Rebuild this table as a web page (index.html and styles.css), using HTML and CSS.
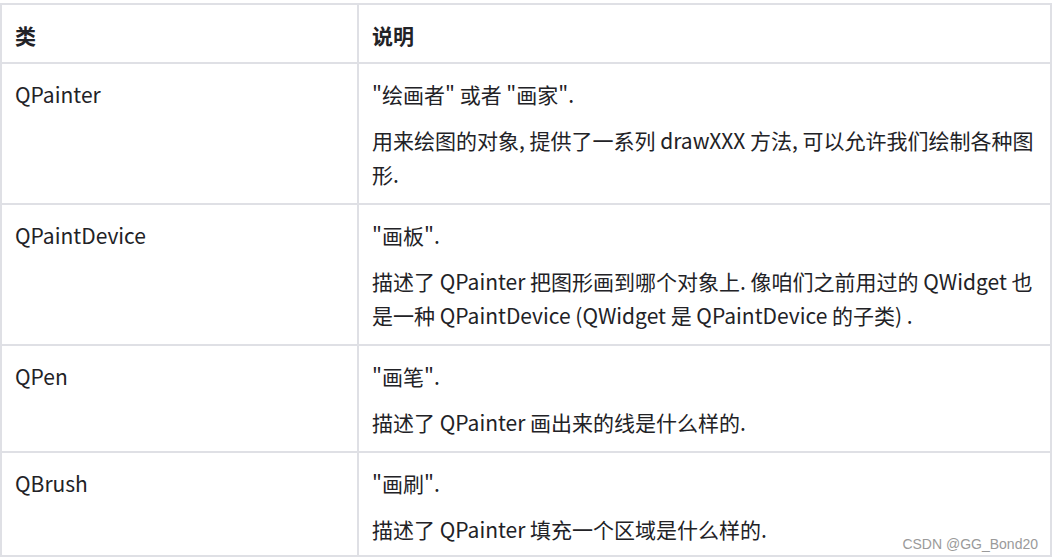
FILE: index.html
```html
<!DOCTYPE html>
<html lang="zh-CN">
<head>
<meta charset="utf-8">
<title>QPainter 类</title>
<link rel="stylesheet" href="styles.css">
</head>
<body>
<div class="page">
  <table class="doc-table">
    <colgroup>
      <col class="col-class">
      <col class="col-desc">
    </colgroup>
    <thead>
      <tr>
        <th>类</th>
        <th>说明</th>
      </tr>
    </thead>
    <tbody>
      <tr>
        <td><p>QPainter</p></td>
        <td>
          <p>"绘画者" 或者 "画家".</p>
          <p>用来绘图的对象, 提供了一系列 drawXXX 方法, 可以允许我们绘制各种图形.</p>
        </td>
      </tr>
      <tr>
        <td><p>QPaintDevice</p></td>
        <td>
          <p>"画板".</p>
          <p>描述了 QPainter 把图形画到哪个对象上. 像咱们之前用过的 QWidget 也是一种 QPaintDevice (QWidget 是 QPaintDevice 的子类) .</p>
        </td>
      </tr>
      <tr>
        <td><p>QPen</p></td>
        <td>
          <p>"画笔".</p>
          <p>描述了 QPainter 画出来的线是什么样的.</p>
        </td>
      </tr>
      <tr class="row-last">
        <td><p>QBrush</p></td>
        <td>
          <p>"画刷".</p>
          <p>描述了 QPainter 填充一个区域是什么样的.</p>
        </td>
      </tr>
    </tbody>
  </table>
  <div class="watermark">CSDN @GG_Bond20</div>
</div>
</body>
</html>
```

FILE: styles.css
```css
html, body {
  margin: 0;
  padding: 0;
  background: #ffffff;
}

body {
  font-family: "Noto Sans CJK SC", "Noto Sans", sans-serif;
  color: #222226;
}

.page {
  position: relative;
  width: 1053px;
  height: 559px;
  padding-top: 3px;
  box-sizing: border-box;
  overflow: hidden;
}

.doc-table {
  border-collapse: collapse;
  table-layout: fixed;
  width: 1052px;
  font-size: 21px;
  line-height: 34px;
}

.col-class {
  width: 357px;
}

.doc-table th,
.doc-table td {
  border: 2px solid #dfe0e5;
  text-align: left;
  vertical-align: top;
  padding: 13px 14px 0 13px;
}

.doc-table th {
  font-weight: 700;
  padding-bottom: 10px;
}

.doc-table p {
  margin: 0 0 12px 0;
}

.row-last p:last-child {
  margin-bottom: 9px;
}

.watermark {
  position: absolute;
  right: 15px;
  bottom: 7px;
  font-family: "Liberation Sans", Arial, sans-serif;
  font-size: 14px;
  line-height: 16px;
  color: #9a9a9a;
}
```
